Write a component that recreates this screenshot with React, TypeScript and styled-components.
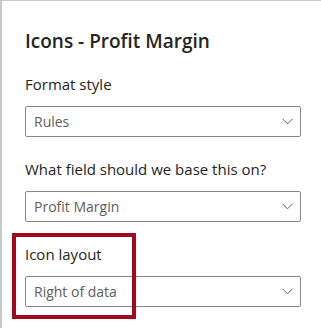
import React from "react";
import styled, { createGlobalStyle } from "styled-components";

const GlobalStyle = createGlobalStyle`
  html, body {
    margin: 0;
    padding: 0;
    background: #ffffff;
  }
  body {
    font-family: "Open Sans", "Noto Sans", sans-serif;
    color: #252423;
  }
`;

interface Field {
  id: string;
  label: string;
  value: string;
  highlighted?: boolean;
}

const fields: Field[] = [
  { id: "format", label: "Format style", value: "Rules" },
  { id: "field", label: "What field should we base this on?", value: "Profit Margin" },
  { id: "layout", label: "Icon layout", value: "Right of data", highlighted: true },
];

const Chevron = () => (
  <svg width="11" height="7" viewBox="0 0 11 7" fill="none">
    <path d="M0.5 0.8 L5.5 5.8 L10.5 0.8" stroke="#605e5c" strokeWidth="1" />
  </svg>
);

const App: React.FC = () => {
  return (
    <>
      <GlobalStyle />
      <Panel>
        <Title>Icons - Profit Margin</Title>
        {fields.map((f) => (
          <Group key={f.id}>
            {f.highlighted && <Highlight />}
            <Label>{f.label}</Label>
            <Dropdown>
              <Value>{f.value}</Value>
              <Chevron />
            </Dropdown>
          </Group>
        ))}
      </Panel>
    </>
  );
};

const Panel = styled.div`
  box-sizing: border-box;
  width: 321px;
  height: 328px;
  border-left: 2px solid #c8c8c8;
  border-top: 1px solid #c8c8c8;
  padding: 27px 0 0 23px;
  overflow: hidden;
`;

const Title = styled.h2`
  margin: 0 0 19px;
  font-size: 19px;
  line-height: 26px;
  font-weight: 600;
  color: #252423;
`;

const Group = styled.div`
  position: relative;
  width: 276px;
  margin-bottom: 21px;
`;

const Highlight = styled.div`
  position: absolute;
  left: -13px;
  top: -10px;
  width: 124px;
  height: 86px;
  box-sizing: border-box;
  border: 4px solid #a5071c;
  pointer-events: none;
  z-index: 1;
`;

const Label = styled.div`
  font-size: 15px;
  line-height: 22px;
  margin-bottom: 11px;
  color: #252423;
`;

const Dropdown = styled.div`
  box-sizing: border-box;
  height: 31px;
  border: 1px solid #8a8886;
  border-radius: 2px;
  display: flex;
  align-items: center;
  justify-content: space-between;
  padding: 0 7px 0 8px;
  background: #fff;
`;

const Value = styled.span`
  font-size: 14px;
  color: #605e5c;
`;

export default App;
